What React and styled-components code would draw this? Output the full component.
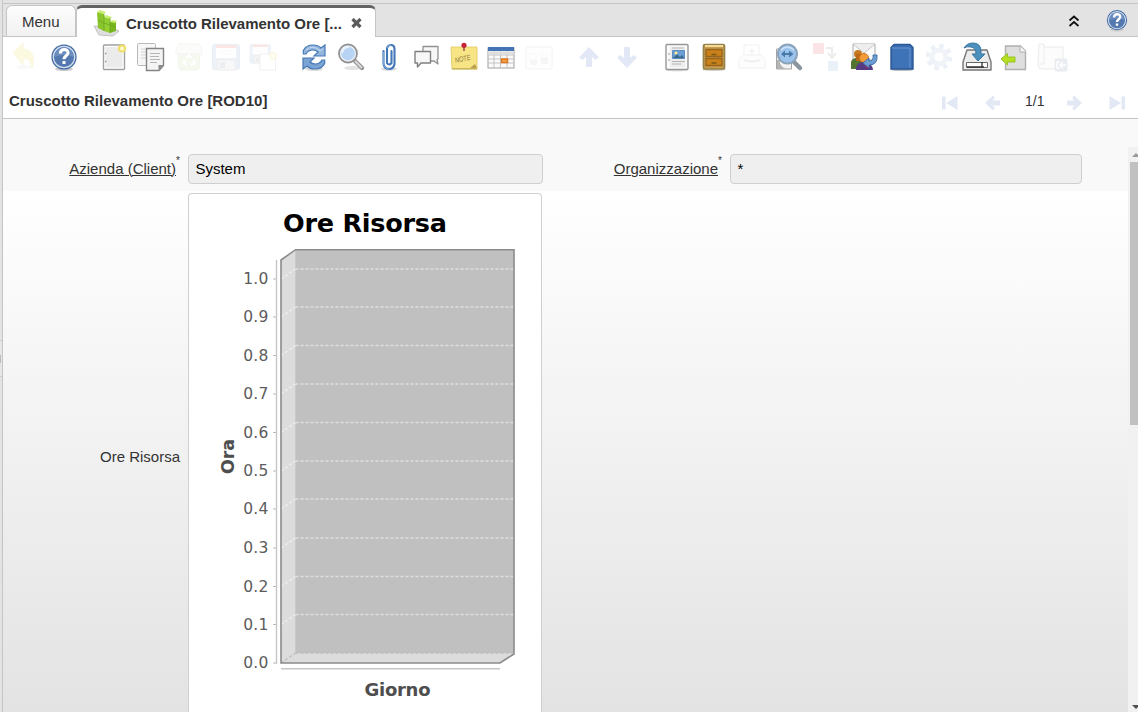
import React from "react";
import styled, { createGlobalStyle } from "styled-components";

const Global = createGlobalStyle`
  * { box-sizing: border-box; }
  body { margin: 0; overflow: hidden; background: #e3e3e3; font-family: "Liberation Sans", Arial, sans-serif; font-size: 15px; color: #333; }
`;

const Page = styled.div`
  display: flex;
  width: 1138px;
  height: 712px;
  background: #e3e3e3;
`;
const Splitter = styled.div`
  width: 3px;
  padding-top: 340px;
  border-right: 1px solid #c5c5c5;
`;
const SplitHandle = styled.div`
  display: flex;
  align-items: center;
  height: 37px;
  border: solid #cfcfcf;
  border-width: 1px 0;
  background: #e6e6e6;
  &::after { content: ""; width: 1px; height: 8px; background: #bbb; }
`;
const Desktop = styled.div`
  flex: 1;
  min-width: 0;
  display: flex;
  flex-direction: column;
  padding-top: 3px;
`;
const TabBar = styled.div`
  display: flex;
  height: 34px;
  flex: none;
  border-top: 1px solid #c5c5c5;
  border-bottom: 1px solid #c5c5c5;
  padding: 1px 9px 0 3px;
`;
const Tab = styled.div`
  display: flex;
  align-items: center;
  white-space: nowrap;
  width: ${(p) => (p.$active ? 300 : 70)}px;
  height: ${(p) => (p.$active ? 32 : 31)}px;
  padding: ${(p) => (p.$active ? "1px 0 0 15px" : "0 0 0 15px")};
  border: 1px solid #c5c5c5;
  border-bottom: 0;
  border-top: ${(p) => (p.$active ? "3px solid #646464" : "1px solid #c5c5c5")};
  border-radius: 6px 6px 0 0;
  background: ${(p) => (p.$active ? "#fff" : "linear-gradient(#fdfdfd, #f1f1f1)")};
  font-weight: ${(p) => (p.$active ? "bold" : "normal")};
`;
const TabText = styled.span`
  margin-left: 4px;
  width: 225px;
`;
const TabTools = styled.div`
  display: flex;
  align-items: center;
  margin-left: auto;
  gap: 25px;
`;
const Toolbar = styled.div`
  display: flex;
  flex: none;
  height: 46px;
  padding: 5px 0 0 5px;
  background: #fff;
`;
const ToolGroup = styled.div`
  display: flex;
  margin-right: 12.6px;
`;
const ToolButton = styled.div`
  width: 37.5px;
  height: 30px;
  display: flex;
  justify-content: center;
  opacity: ${(p) => (p.$off ? 0.16 : 1)};
`;
const TitleBar = styled.div`
  display: flex;
  align-items: center;
  justify-content: space-between;
  flex: none;
  height: 36px;
  padding: 0 12px 0 6px;
  border-bottom: 1px solid #c5c5c5;
  background: #fff;
`;
const Title = styled.div`
  font-weight: bold;
`;
const Pager = styled.div`
  display: flex;
  align-items: center;
  font-size: 14px;
  & > svg { margin-top: 4px; }
  & > svg:first-child, & > svg:nth-last-child(2) { margin-right: 25px; }
`;
const PageCount = styled.span`
  width: 20px;
  margin: 0 20px 0 23px;
`;
const Body = styled.div`
  flex: 1;
  min-height: 0;
  background: #f9f9f9;
  padding-top: 28px;
`;
const Scroller = styled.div`
  display: flex;
  height: 100%;
`;
const Form = styled.div`
  flex: 1;
  display: flex;
  flex-direction: column;
`;
const Row = styled.div`
  display: flex;
  height: 44px;
  padding-top: 7px;
`;
const Label = styled.div`
  display: flex;
  justify-content: flex-end;
  align-items: center;
  width: ${(p) => p.$w}px;
  height: 28px;
  padding-right: 8px;
  & u { text-decoration-thickness: 1px; text-underline-offset: 1px; }
`;
const Star = styled.sup`
  width: 4px;
  font-size: 10px;
  line-height: 10px;
  align-self: flex-start;
  margin-top: 2px;
`;
const Field = styled.div`
  width: ${(p) => p.$w}px;
  height: 30px;
  line-height: 28px;
  padding-left: 6.4px;
  color: #000;
  background: #efefef;
  border: 1px solid #cfcfcf;
  border-radius: 4px;
`;
const ChartRow = styled.div`
  display: flex;
  flex: 1;
  min-height: 0;
  padding-top: 2px;
  background: linear-gradient(#fff, #e3e3e3);
`;
const ChartLabel = styled(Label)`
  height: 526px;
`;
const ChartCard = styled.div`
  width: 354px;
  border: 1px solid #cfcfcf;
  border-bottom: 0;
  border-radius: 4px 4px 0 0;
  background: #fff;
  & svg { display: block; }
`;
const Scrollbar = styled.div`
  width: 10px;
  display: flex;
  flex-direction: column;
  align-items: flex-end;
  overflow: hidden;
  background: #f1f1f1;
`;
const Thumb = styled.div`
  width: 8px;
  height: 263px;
  margin-bottom: auto;
  background: #c1c1c1;
`;

const Help = () => (
  <>
    <ellipse cx="15" cy="27" rx="9" ry="2" fill="#ccc" />
    <circle cx="15" cy="15" r="12.6" fill="#426ba5" />
    <circle cx="15" cy="15" r="10.7" fill="#5379b0" stroke="#d3dfee" strokeWidth="1.3" />
    <path d="M5.5 15a9.5 9.5 0 0 1 19 0q-9-4-19 0" fill="#86a5cf" opacity=".5" />
    <path d="M11.3 11.5c.2-5.3 8-5 7.7-.5-.2 2.7-4 3-4 6.2M15 19v3" fill="none" stroke="#fff" strokeWidth="3" />
  </>
);
const Floppy = () => (
  <>
    <rect x="1.5" y="2.5" width="27" height="25" rx="2" fill="#97b5dc" stroke="#7f9fcc" />
    <path d="M5 3h20v13H5z" fill="#fff" /><path d="M5 3h20v3H5z" fill="#ef6b60" />
    <path d="M8 9h14M8 12h14" stroke="#ddd" />
    <rect x="7" y="18" width="17" height="10" fill="#d8d8d8" stroke="#999" /><path d="M9 20h5v6H9z" fill="#8c97a6" />
  </>
);
const Ring = ({ x, y }) => <circle cx={x} cy={y} r="3" fill="#fffbd0" stroke="#f0de68" strokeWidth="2.2" />;
const refreshHalf = "M4.3 12V8.5Q7 3 14 3q5 0 8 3l4-3v11H15l4-4q-2-2-5-2-5 0-7 4z";

const icons = {
  undo: <><ellipse cx="14" cy="25" rx="9" ry="2" fill="#ddd" /><path d="M2 11 12 1v6c8 0 13 6 9 19-1-7-3-10-9-9v6z" fill="#f2de4e" stroke="#e6cd48" /></>,
  help: <Help />,
  fresh: <><rect x="4.5" y="3" width="21" height="24.5" rx="1" fill="#fff" stroke="#a0a0a0" strokeWidth="1.4" /><rect x="6.5" y="5" width="17" height="20.5" fill="#ebebeb" /><path d="M6 11.5h1.5M6 19.5h1.5" stroke="#999" strokeWidth="1.5" /><Ring x={23} y={6.5} /></>,
  copy: <><rect x="1.5" y="1.5" width="18" height="22" rx="1" fill="#f7f7f7" stroke="#b9b9b9" /><path d="M5 7h11M5 10h9M5 13h7M5 16h5" stroke="#d4d4d4" /><path d="M10.5 6.5h17v17l-4.5 5H10.500z" fill="#f4f4f4" stroke="#848484" strokeWidth="1.4" /><path d="M14 11.5h10M14 14.5h9M14 17.5h10M14 20.5h7" stroke="#b5b5b5" /><path d="M22.500 28v-5h5z" fill="#888" /></>,
  bin: <><path d="M4 9h22l-1 17q0 2-3 2H8q-3 0-3-2z" fill="#c3dba3" stroke="#acc48e" /><path d="M5 2h20l3 6v4H2V8z" fill="#eef1e8" stroke="#bfc8b4" /><path d="m12 16 3-2.500 3 2.500m1.500 2 1 3-3.500 2m-4 0-3.500-2 1.500-3" fill="none" stroke="#fff" strokeWidth="2.4" /></>,
  save: <Floppy />,
  saveNew: <><g transform="translate(0 .5) scale(.75)"><Floppy /></g><rect x="11" y="12" width="15.500" height="16" fill="#fff" stroke="#aaa" /><Ring x={24} y={14} /></>,
  refresh: <><ellipse cx="15" cy="27" rx="9" ry="2" fill="#ddd" /><path d={refreshHalf} fill="#93b5de" stroke="#4679b5" strokeWidth="1.2" /><path d={refreshHalf} transform="rotate(180 15 15)" fill="#7ba3d3" stroke="#4679b5" strokeWidth="1.2" /><path d="M7 8q7-6 14 1l3-2" fill="none" stroke="#c8daf0" /></>,
  find: <><ellipse cx="17" cy="26" rx="9" ry="2" fill="#e3e3e3" /><path d="m18 18 8 8" stroke="#929292" strokeWidth="4.4" strokeLinecap="round" /><path d="m19 19 7 7" stroke="#dadada" strokeWidth="2" /><circle cx="12" cy="11.5" r="9" fill="#a9caf0" stroke="#929292" strokeWidth="1.8" /><circle cx="12" cy="11.5" r="7.4" fill="#b7d4f5" stroke="#eee" strokeWidth="1.2" /><path d="M6 11q1-6 7-6" fill="none" stroke="#e8f3ff" strokeWidth="2" /></>,
  clip: <><ellipse cx="15" cy="27" rx="8" ry="1.7" fill="#ddd" /><path d="M17.500 9v12q-2.500 3-4.500 0V6q1-3 4-3 3.500 0 3.500 4v15q-1 5-5.500 5t-5.500-5V9" fill="none" stroke="#4278b7" strokeWidth="2.100" strokeLinecap="round" /><path d="M9.600 10v12q1 5 5.500 5M13 6q1-3 4-3" fill="none" stroke="#a1c0e5" strokeWidth=".7" /></>,
  chat: <><path d="M12 4.500h15v12.500l-1 1 1 4-4-3H12z" fill="#f7f7f7" stroke="#929292" strokeWidth="1.300" strokeLinejoin="round" /><path d="M4 9.500h15.500v11.500H10l-3.500 4v-4H4z" fill="#f7f7f7" stroke="#808080" strokeWidth="1.400" strokeLinejoin="round" /></>,
  note: <><path d="M2 5h26v22H3z" fill="#f7e484" stroke="#e4d173" /><path d="M3 27.500h25v-1.500H3z" fill="#cdb660" /><path d="m21 26 5-4 2 4z" fill="#b9a050" /><text x="5.500" y="19.500" fontFamily="Liberation Sans, sans-serif" fontSize="7.500" textLength="16" lengthAdjust="spacingAndGlyphs" fontStyle="italic" fill="#8f7a42" transform="rotate(-12 13 16)">NOTE</text><circle cx="15" cy="3.300" r="2.600" fill="#ca2439" /><path d="M15 5v4" stroke="#913840" strokeWidth="1.300" /></>,
  grid: <><rect x="2" y="6" width="26" height="20" fill="#fafafa" stroke="#a0a0a0" /><path d="M2 5h26v4H2z" fill="#4574b5" /><path d="M2 13h26M2 17h26M2 21h26M8 9v17M14.500 9v17M21 9v17" stroke="#c3c3c3" /><path d="M2 11h26" stroke="#dedede" strokeWidth="3" /><rect x="15.500" y="17" width="6" height="3.500" fill="#f5a440" stroke="#de7623" strokeWidth="1.500" /></>,
  forms: <g opacity=".6"><rect x="2" y="5" width="26" height="22" rx="1" fill="#fafafa" stroke="#999" /><path d="M6 12h6v6H6zM18 11h5v5h-5z" fill="#fff" stroke="#bbb" /><path d="M6 18h7v5H6zM17 15h7v7h-7z" fill="#aaa" /></g>,
  up: <path d="m15 5 10 10.500-3.500 2.500-3.500-3v10h-6V15l-3.500 3L5 15.500z" fill="#e2e8f5" />,
  down: <path d="m15 26-10-10.500L8.500 13l3.500 3V5h6v11l3.500-3 3.500 2.500z" fill="#e2e8f5" />,
  report: <><ellipse cx="15" cy="28" rx="11" ry="1.500" fill="#ddd" /><rect x="4" y="2.500" width="22" height="25" rx="1" fill="#fafafa" stroke="#979797" strokeWidth="1.400" /><path d="M8 5h15v20H8z" fill="#ededed" /><path d="M6 12h2M6 18h2" stroke="#bbb" strokeWidth="1.500" /><path d="M10.500 8.500h12v8h-12z" fill="#6c9fd4" stroke="#5a8cc0" /><path d="m11 16 4-4 3 3 2-2 2 3z" fill="#3d6788" /><circle cx="14" cy="11" r="1.500" fill="#ffeb92" /><path d="M10 6h12M10 19.500h13M10 22h9" stroke="#b5b5b5" /></>,
  archive: <><ellipse cx="15" cy="27.500" rx="12" ry="1.500" fill="#ccc" /><rect x="4.500" y="2.500" width="21" height="24.500" rx="1.500" fill="#c69d50" stroke="#95824a" strokeWidth="1.700" /><path d="M6 4h18" stroke="#f4d895" strokeWidth="2" /><path d="M7 7.500h16v7H7zM7 16.500h16v7H7z" fill="#cb8119" stroke="#98641c" strokeWidth="1.300" /><path d="M12.500 12.500h5M12.500 21h5" stroke="#78591c" strokeWidth="1.500" /></>,
  print: <g opacity=".65"><path d="M7 3h15v13H7z" fill="#fff" stroke="#888" /><path d="M6 13h18l4 5v8H2v-8z" fill="#eee" stroke="#888" /><path d="M7 18q8 3 16 0" stroke="#777" fill="none" strokeWidth="2" /><path d="m15 6 4 4h-3v4h-2v-4h-3z" fill="#aaa" /></g>,
  zoom: <><path d="M2.500 7h15v20h-15z" fill="#f3f3f3" stroke="#a5a5a5" /><path d="M3 18h2.500q0 6 6 9H3z" fill="#b4b4b4" /><path d="m20 20 6 6" stroke="#8b959d" strokeWidth="4.500" strokeLinecap="round" /><circle cx="13.500" cy="12" r="9.600" fill="#9cc3eb" stroke="#8ca4ba" strokeWidth="2" /><path d="m7 12 4-3.500v2.500h4V8.500l4.500 3.500-4.500 3.500V13h-4v2.500z" fill="#4979a9" /><path d="M7 8q6-6 13 0" stroke="#cde3f8" fill="none" strokeWidth="1.500" /></>,
  flow: <><path d="M1 1h11v11H1z" fill="#e45d68" /><path d="M16 19h10v10H16z" fill="#82aad9" /><path d="M14 6h6v8m-4-3 4 5 4-5" fill="none" stroke="#888" strokeWidth="1.800" /></>,
  request: <><path d="M4 2h22v16H4z" fill="#fafafa" stroke="#aaa" /><path d="m4 2 11 9L26 2" fill="#eee" stroke="#c6c6c6" /><circle cx="9" cy="12" r="4" fill="#c77922" /><path d="M2 20q1-4 6-4t7 3v8H2z" fill="#527332" /><path d="M7 12h8v7H7z" fill="#b86717" /><circle cx="15" cy="16" r="4.500" fill="#f19b39" stroke="#d97716" /><path d="M7 28q0-8 8-8t9 8z" fill="#563a83" /><path d="m15 21 3 6 2-5z" fill="#bd253a" /><path d="m14 21 6-5v3q5 0 4-6h4q1 10-8 10v3z" fill="#6f9fd2" stroke="#3d71ac" /></>,
  product: <><ellipse cx="15" cy="27.500" rx="12" ry="1.600" fill="#bbb" /><path d="m7 2.500h16l3 3V27H4V5.500z" fill="#3a6db1" stroke="#2b5998" strokeWidth="1.400" strokeLinejoin="round" /><path d="M6 6h17v20H6z" fill="#3f73b8" /><path d="M5 6h18v20" stroke="#6d96cc" fill="none" /></>,
  gear: <><circle cx="15" cy="15" r="11" fill="none" stroke="#8fa8d0" strokeWidth="4.500" strokeDasharray="4.320 4.320" /><circle cx="15" cy="15" r="7" fill="none" stroke="#a8bbda" strokeWidth="5" /></>,
  export: <><path d="M5 8h20l4 12v8H1v-8z" fill="#ececec" stroke="#777" strokeWidth="1.400" strokeLinejoin="round" /><path d="M4.500 20.500h21v5h-21z" fill="#fff" stroke="#666" /><path d="M20 20v5M5 25h17" stroke="#333" strokeWidth="1.300" /><path d="M2 6Q5 1 11 1q9 0 8 11h4l-7 7-6-7h4q0-6-5-7-4-1-7 1z" fill="#4c91bd" stroke="#3977a0" /></>,
  import: <><path d="M6.500 4h15l5 5v18.500h-20z" fill="#dedede" stroke="#b0b0b0" strokeWidth="1.400" /><path d="M21 4v6h6" fill="#f7f7f7" stroke="#b0b0b0" /><path d="m2 17 6.500-5.500v3.500H16v5H8.500v3z" fill="#b7df24" stroke="#98c326" /></>,
  csv: <><path d="M2 2h5v3h19v22H5q-4 0-4-4z" fill="#eee" stroke="#888" /><path d="M7 4v18H2" stroke="#999" fill="none" /><rect x="17.500" y="16.500" width="13" height="13" rx="2" fill="#7c90a8" /><path d="M23 20h-3v6h3m6-3h-6m3-3-3 3 3 3" fill="none" stroke="#fff" strokeWidth="1.500" /></>,
};
const groups = [
  ["-undo", "help"],
  ["fresh", "copy", "-bin", "-save", "-saveNew"],
  ["refresh", "find", "clip", "chat", "note", "grid", "-forms"],
  ["up", "down"],
  ["report", "archive", "-print", "zoom", "-flow", "request", "product", "-gear", "export", "import", "-csv"],
];

const PagerIcon = ({ kind, flip }) => (
  <svg width="18" height="16" viewBox="0 0 18 16">
    <g transform={flip ? "matrix(-1 0 0 1 18 0)" : undefined} fill="#e2e8f4">
      {kind === "end" ? <path d="M1 1.500h3.500v13H1zM16.500 1v14L5 8z" /> : <path d="m1 8 8-7.500 2 2.500L8.500 5.500H16v5H8.500l2.500 2.500-2 2.500z" />}
    </g>
  </svg>
);

const ticks = [279, 317, 355.5, 394, 432.5, 471, 509, 548, 586.5, 624.5, 663];
const Chart = () => (
  <svg width="352" height="518" viewBox="189 194 352 518" fontFamily="DejaVu Sans, sans-serif">
    <text x="365" y="232" fontSize="25.5" fontWeight="bold" textAnchor="middle" textLength="164" fill="#000">Ore Risorsa</text>
    <path d="M281 260 295.500 250H514v404L500 663H281z" fill="#dcdcdc" />
    <path d="M295.300 250H514v403H295.300z" fill="#c0c0c0" />
    {ticks.map((y, i) => (
      <g key={y}>
        <path d={`M281 ${y}L295.5 ${y - 10}`} fill="none" stroke={i === 10 ? "#bdbdbd" : "#f0f0f0"} strokeWidth="1.3" strokeDasharray="3 2" />
        <path d={`M295.5 ${y - 10}H514`} fill="none" stroke={i === 10 ? "#bdbdbd" : "#dedede"} strokeWidth="1.3" strokeDasharray="3 2" />
        <path d={`M273 ${y}h4`} stroke="#bbb" />
        <text x="268.3" y={y + 5.3} fontSize="15.5" textAnchor="end" textLength="25" fill="#5c5c5c">{((10 - i) / 10).toFixed(1)}</text>
      </g>
    ))}
    <path d="M281 260 295.500 249.700H514V654L500 663H281z" fill="none" stroke="#8b8b8b" strokeWidth="1.600" />
    <path d="M276.500 260v404M281 668.700h219" stroke="#c6c6c6" strokeWidth="1.400" />
    <text transform="translate(233.5 456.5) rotate(-90)" fontSize="17.5" fontWeight="bold" textAnchor="middle" textLength="35" fill="#4e4e4e">Ora</text>
    <text x="397.500" y="695.500" fontSize="18" fontWeight="bold" textAnchor="middle" textLength="66" fill="#4e4e4e">Giorno</text>
  </svg>
);

export default function App() {
  return (
    <Page>
      <Global />
      <Splitter><SplitHandle /></Splitter>
      <Desktop>
        <TabBar>
          <Tab>Menu</Tab>
          <Tab $active>
            <svg width="30" height="28" viewBox="0 0 30 28">
              <path d="m2 17 17 1 8 4-6 5-14-1z" fill="#dedede" stroke="#c3c3c3" />
              <path d="m5 3 7 2v17l-6-3z" fill="#8ac62b" /><path d="m12 8 6 1v15l-6-2z" fill="#94cf34" /><path d="m18 13 6 0v9l-6 2z" fill="#78b51f" />
              <path d="m5 3 3-2 6 2-2 2zM12 8l2-2 6 2-2 2zM18 13l2-2 5 1-2 2z" fill="#c7ee70" />
              <path d="M6 11l6 3 12 4M12 5v17M18 9v15" fill="none" stroke="#6ba722" strokeWidth=".8" />
            </svg>
            <TabText>Cruscotto Rilevamento Ore [...</TabText>
            <svg width="11" height="11" viewBox="0 0 11 11"><path d="m1.500 1 8 8m0-8-8 8" stroke="#5b5b5b" strokeWidth="3.200" /></svg>
          </Tab>
          <TabTools>
            <svg width="12" height="12" viewBox="0 0 12 12"><path d="m1.500 5.500 4.500-4 4.500 4m-9 5.500 4.500-4 4.500 4" fill="none" stroke="#111" strokeWidth="1.700" /></svg>
            <svg width="24" height="24" viewBox="0 1 30 30"><Help /></svg>
          </TabTools>
        </TabBar>
        <Toolbar>
          {groups.map((g) => (
            <ToolGroup key={g[0]}>
              {g.map((n) => (
                <ToolButton key={n} $off={n[0] === "-"}>
                  <svg width="31" height="30" viewBox="0 0 31 30">{icons[n.replace("-", "")]}</svg>
                </ToolButton>
              ))}
            </ToolGroup>
          ))}
        </Toolbar>
        <TitleBar>
          <Title>Cruscotto Rilevamento Ore [ROD10]</Title>
          <Pager>
            <PagerIcon kind="end" />
            <PagerIcon />
            <PageCount>1/1</PageCount>
            <PagerIcon flip />
            <PagerIcon kind="end" flip />
          </Pager>
        </TitleBar>
        <Body>
          <Scroller>
            <Form>
              <Row>
                <Label $w={185}><u>Azienda (Client)</u><Star>*</Star></Label>
                <Field $w={355}>System</Field>
                <Label $w={187}><u>Organizzazione</u><Star>*</Star></Label>
                <Field $w={352}>*</Field>
              </Row>
              <ChartRow>
                <ChartLabel $w={185}>Ore Risorsa</ChartLabel>
                <ChartCard><Chart /></ChartCard>
              </ChartRow>
            </Form>
            <Scrollbar>
              <svg width="8" height="15" viewBox="0 0 8 15"><path d="m2 10 4-4 4 4z" fill="#999" /></svg>
              <Thumb />
              <svg width="8" height="15" viewBox="0 0 8 15"><path d="m2 8 4 4 4-4z" fill="#505050" /></svg>
            </Scrollbar>
          </Scroller>
        </Body>
      </Desktop>
    </Page>
  );
}
